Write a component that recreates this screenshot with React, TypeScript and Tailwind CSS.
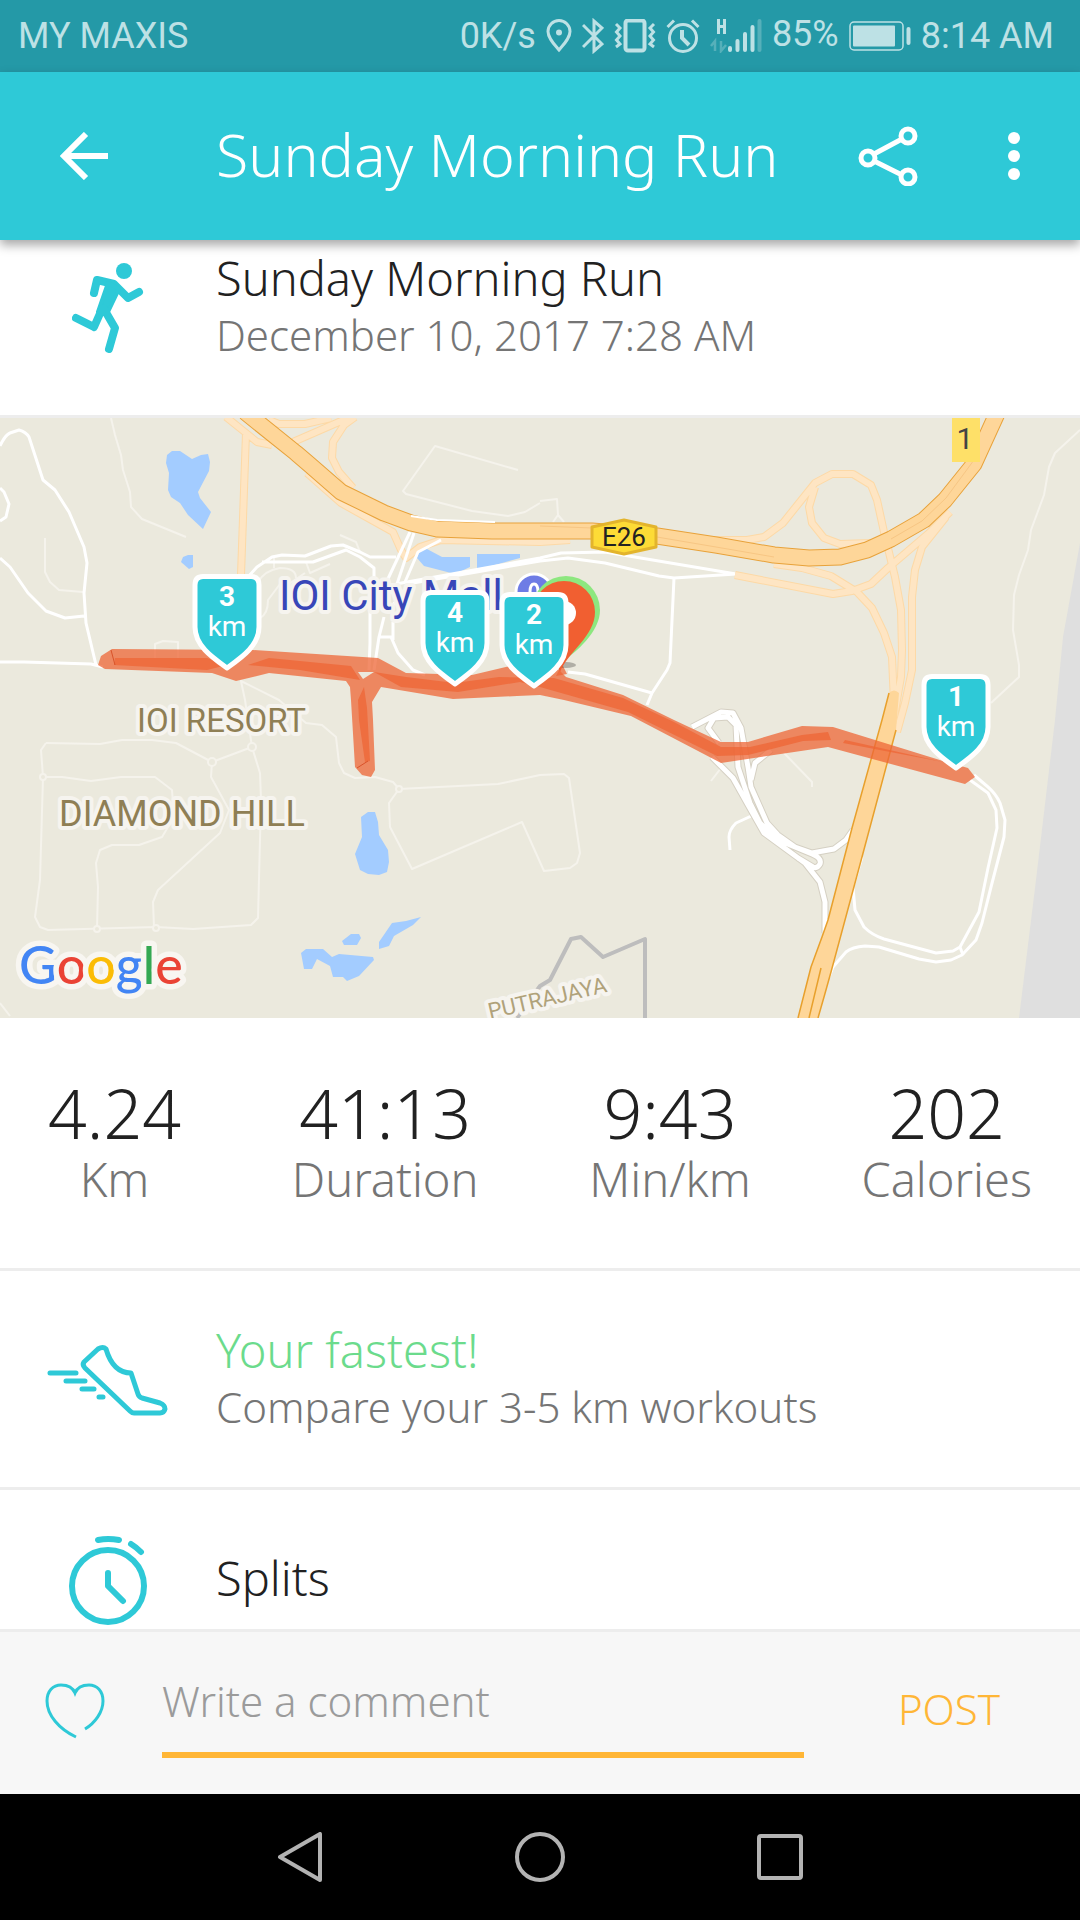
import type { ReactNode } from "react";

const stats = [
  { value: "4.24", label: "Km" },
  { value: "41:13", label: "Duration" },
  { value: "9:43", label: "Min/km" },
  { value: "202", label: "Calories" },
];

const kmMarkers = [
  { km: 1, x: 956, y: 256 },
  { km: 3, x: 227, y: 156 },
  { km: 4, x: 455, y: 172 },
  { km: 2, x: 534, y: 174 },
];

const interchange =
  "M692 309 L721 294 L733 295 L741 310 L748 349 L751 369 L767 405 L778 417 L795 429 L812 435 L834 431 L846 422 L853 412 M719 325 L708 310 L714 300 L728 299 L736 307 L738 349 L750 385 L760 405 L778 422 L812 436 Q822 440 820 446 Q817 451 813 449 L798 440 M712 339 L733 360 L747 385 L764 415 L805 445 L820 464 L825 484 V515 M771 332 L755 345 L751 362";

const slipRoads =
  "M246 15 L241 157 M226 -1 L246 15 L257 24 L272 27 M269 2 L279 6 H305 L331 0 M293 24 L348 0 M355 -1 L344 7 L333 24 L332 40 L339 54 L353 70 M307 55 L341 85 L393 114 L401 132 L406 140 L420 129 L441 122 L540 124 L570 122 M712 122 L747 122 L764 119 L783 105 L815 65 L832 56 H853 L871 67 L877 82 L884 114 L895 159 L901 192 L902 232 L901 259 L893 305 M815 69 L809 89 L812 105 L824 120 L840 126 L871 125 M774 146 L802 150 L831 158 L857 174 L872 190 L884 215 L892 239 L894 285 M735 157 L833 176 L852 173 L871 166 L888 150 L929 115 L950 94 M946 99 L922 129 L915 152 L912 179 V252 L905 285 L897 314";

const e26 =
  "M245 -6 L296 35 L310 47 L341 74 L384 95 L411 105 L437 111 L492 113 L592 113 L657 118 L716 127 L774 137 L809 140 L840 139 L867 132 L891 121 L924 102 L945 82 L974 46 L1000 -11";

const StatusBar = () => (
  <div className="flex h-[72px] items-center justify-between bg-[#2499a7] pl-[18px] pr-[26px] font-[Roboto,sans-serif] text-[36px] leading-[44px] font-normal text-[#bde1e5]">
    <span>MY MAXIS</span>
    <div className="flex items-center gap-[10px]">
      <span>0K/s</span>
      <svg className="h-[34px] w-[26px]" viewBox="0 0 26 34" fill="none" stroke="currentColor" strokeWidth="3">
        <path d="M13 31 C8 25 2 19 2 12.500 A11 11 0 0 1 24 12.500 C24 19 18 25 13 31 Z" />
        <circle cx="13" cy="13.500" r="3" fill="currentColor" stroke="none" />
      </svg>
      <svg className="h-[36px] w-[22px]" viewBox="0 0 22 36" fill="none" stroke="currentColor" strokeWidth="3">
        <path d="M1 7 L20 26 L12 33 V3 L20 10 L1 29" />
      </svg>
      <svg className="h-[34px] w-[42px]" viewBox="0 0 42 34" fill="none" stroke="currentColor" strokeWidth="3">
        <rect x="11.500" y="1.500" width="19" height="30" rx="2.500" strokeWidth="4" />
        <path d="M2 5 L6 9 L2.500 13 L6 17 L2.500 21 L6 25 L2 28 M40 5 L36 9 L39.500 13 L36 17 L39.500 21 L36 25 L40 28" />
      </svg>
      <svg className="h-[34px] w-[34px]" viewBox="0 0 34 34" fill="none" stroke="currentColor" strokeWidth="3">
        <circle cx="17" cy="19" r="13.500" />
        <path d="M16 11 V19 L23 26" strokeWidth="4" />
        <path d="M1.500 8 L8 1.500 M32.500 8 L26 1.500" />
      </svg>
      <svg className="h-[34px] w-[52px]" viewBox="0 0 52 34" fill="none" stroke="currentColor" strokeLinecap="round">
        <path d="M8.500 0 V15 M14.500 0 V15 M8.500 7.500 H14.500" strokeWidth="3" strokeLinecap="butt" />
        <g stroke="#56b0ba">
          <path d="M1 27 L5 22 V32 M16 26 L11 32 V22" strokeWidth="2.500" strokeLinecap="butt" />
          <path d="M49.500 2 V31" strokeWidth="4" />
        </g>
        <path d="M20 29 V31 M27.500 22 V31 M35 15 V31 M42.500 8 V31" strokeWidth="4" />
      </svg>
      <span className="pb-1">85%</span>
      <svg className="h-[30px] w-[62px]" viewBox="0 0 62 30" fill="none" stroke="currentColor">
        <rect x="1" y="1" width="53" height="28" rx="4" strokeWidth="1.500" />
        <rect x="4" y="4.500" width="42" height="21" rx="1" fill="currentColor" stroke="none" />
        <path d="M59.500 8 V22" strokeWidth="4" strokeLinecap="round" />
      </svg>
      <span>8:14 AM</span>
    </div>
  </div>
);

const AppBar = () => (
  <header className="relative z-10 flex h-[168px] items-center bg-[#2ec9d7] pr-[30px] text-white shadow-[0_5px_10px_rgba(0,0,0,0.35)]">
    <button aria-label="Back" className="flex w-[216px] pl-[60px]">
      <svg className="h-[48px] w-[48px]" viewBox="0 0 48 48" fill="none" stroke="currentColor" strokeWidth="6">
        <path d="M48 24 H5 M26 2 L4 24 L26 46" />
      </svg>
    </button>
    <h1 className="flex-1 whitespace-nowrap pb-1 text-[59px] leading-[76px]">Sunday Morning Run</h1>
    <button aria-label="Share" className="flex w-[100px] justify-center">
      <svg className="h-[60px] w-[60px]" viewBox="0 0 60 60" fill="none" stroke="currentColor" strokeWidth="5">
        <path d="M16 28 L44 13 M16 35 L44 49" />
        <circle cx="50" cy="10" r="7" />
        <circle cx="10" cy="32" r="7" />
        <circle cx="50" cy="51" r="7" />
      </svg>
    </button>
    <button aria-label="More options" className="ml-[40px] flex w-[72px] justify-center">
      <svg className="h-[48px] w-[12px]" viewBox="0 0 12 48" fill="currentColor">
        <circle cx="6" cy="6" r="6" />
        <circle cx="6" cy="24" r="6" />
        <circle cx="6" cy="42" r="6" />
      </svg>
    </button>
  </header>
);

const KmMarker = ({ km, x, y }: { km: number; x: number; y: number }) => (
  <g transform={`translate(${x} ${y})`} textAnchor="middle" fill="#fff">
    <path
      d="M-24 2.500 H24 Q32 2.500 32 11 V53 C32 72 14 84 0 94 C-14 84 -32 72 -32 53 V11 Q-32 2.500 -24 2.500 Z"
      fill="#2ec9d7"
      stroke="#fff"
      strokeWidth="5"
    />
    <text y="32" fontSize="28" fontWeight="700">{km}</text>
    <text y="62" fontSize="28">km</text>
  </g>
);

const RouteMap = () => (
  <svg className="block w-full font-normal" viewBox="0 0 1080 600" fill="none" fontFamily="Roboto, sans-serif" strokeLinejoin="round">
    <rect width="1080" height="600" fill="#ebe9dd" />
    <path d="M1080 125 L1063 219 L1055 302 L1036 462 L1019 600 H1080 Z" fill="#dfdfdf" />

    {/* lakes */}
    <g fill="#a3ccff">
      <path d="M172 33 L180 33 L192 41 L201 37 L208 36 L210 44 L209 53 L198 74 L200 80 L211 94 L203 111 L188 97 L180 85 L171 79 L168 72 L169 55 L166 45 L167 37 Z" />
      <path d="M188 137 L193 137 V149 L189 151 L181 144 L183 139 Z" />
      <path d="M420 131 L427 131 L442 139 L470 139 V149 L455 156 L424 148 L417 140 Z M477 136 H520 V140 L477 152 Z" />
      <path d="M361 399 L368 394 H375 L378 404 L379 417 L388 432 L389 444 L387 454 L379 457 L368 456 L360 452 L355 436 L362 419 Z" />
      <path d="M421 499 L413 507 L394 518 L389 528 L379 531 V524 L392 505 L406 503 Z M351 516 H359 L361 520 L357 527 H344 L342 523 Z" />
      <path d="M301 535 L306 531 H323 L332 539 L339 536 L373 539 L374 542 L359 558 L347 563 L343 559 H333 L330 548 L317 541 L312 551 H304 Z" />
    </g>

    {/* small lanes */}
    <g stroke="#f5f3ec" strokeWidth="2">
      <path d="M111 0 L115 17 L121 37 L123 52 L130 74 L131 89 L142 101 L186 119 M45 120 V154 L50 164 L59 172 L83 174" />
      <path d="M518 52 L435 28 L403 73 L406 76 L472 93 L508 98 L525 94 L540 85 M540 83 L557 81 L558 97 L553 104 M558 97 L564 104" />
      <path d="M155 240 V226 L163 223 L178 224 V240 M257 165 Q265 152 280 150 Q296 150 296 160 M260 200 Q268 196 268 182 L280 166 M306 144 L310 155 L330 146 M305 155 L280 172 M340 117 L356 124 L360 134 M274 138 V150" />
      <path d="M46 325 L100 326 L122 322 H152 L176 325 L212 344 L252 329 L245 282 L241 263 L279 282 L306 305 L322 307 L336 319 L339 345 L344 355 L355 360 L375 359 L393 364 L399 371 L498 366 L540 357 L564 356 L569 360 L580 435 L577 445 L570 450 L544 453 L522 404 L412 451 L390 409 L389 385 L399 371" />
      <path d="M46 325 L41 332 L43 359 L40 462 L35 499 L40 509 L48 512 L156 509 L193 511 L251 507 L258 500 L261 382 L260 355 L252 329" />
      <path d="M43 359 H62 L91 363 L121 359 H155 L172 372 L174 399 L162 419 L139 427 H112 L100 432 L96 445 L98 469 L97 511 M212 344 L211 359 L229 392 L220 415 L158 472 L153 484 L154 509" />
      <path d="M1080 12 L1055 35 L1049 49 L1044 77 L1031 112 L1028 132 L1019 157 L1014 177 L1013 212 L1019 247 V259 L991 285 M721 350 L711 363 M784 335 L812 364 V369 M0 585 L10 598" />
      <g fill="#ebe9dd">
        <circle cx="43" cy="359" r="3" />
        <circle cx="212" cy="344" r="4" />
        <circle cx="252" cy="329" r="4" />
        <circle cx="399" cy="371" r="3" />
        <circle cx="97" cy="511" r="3" />
        <circle cx="156" cy="510" r="3" />
      </g>
    </g>

    {/* local roads */}
    <g stroke="#fff" strokeWidth="3">
      <path d="M0 28 Q5 17 10 15 L19 12 Q26 14 29 19 L43 62 L55 72 L69 94 L84 129 L87 145 L84 175 L86 205 L96 247 M0 140 L10 149 L28 175 L46 193 L65 200 L84 198 M0 70 L4 74 L9 86 L6 99 L0 103 M0 244 H24 L91 246 L103 249" />
      <path d="M248 159 L257 149 L272 139 L282 137 L305 138 L331 128 L343 127 L360 134 L370 139 H396 M262 144 H313 L346 132 L360 139 L374 150 V165 L370 179 V225 L369 252" />
      <path d="M384 199 L379 219 L374 252 M379 219 H391 L398 235 L413 252 L425 257 M393 222 V204" />
      <path d="M396 166 L540 140 L561 135 L605 134 L736 156 L674 160 L659 158 L605 145 L568 140 L540 143 L413 165 L390 190" />
      <path d="M674 160 L670 245 L667 252 L652 275 L647 287 M568 254 L585 256 L652 275" />
      <path d="M974 357 L988 369 Q996 376 1000 385 L1005 402 L1004 419 L991 469 L982 505 L976 522 L962 537 L951 542 L936 544 L919 541 L879 529 L865 528 Q852 529 846 534 L833 549 L829 559" />
      <path d="M970 362 L988 375 L996 392 L997 410 L988 450 L979 494 L960 529 L953 533 L936 535 L884 521 Q872 517 864 509 L855 492 L853 469 L862 439 M960 529 L963 537" />
      <path d="M760 394 L736 405 Q729 412 729 419 L730 432" />
    </g>
    <path d={interchange} stroke="#d5d0c3" strokeWidth="7" />
    <path d={interchange} stroke="#fff" strokeWidth="5" />

    {/* slip roads */}
    <path d={slipRoads} stroke="#fdd9a6" strokeWidth="8" />
    <path d={slipRoads} stroke="#fee5c3" strokeWidth="6" />
    <path d="M410 114 L386 165 M414 115 L396 169 M441 122 L418 134 L405 164" stroke="#fff" strokeWidth="3" />

    {/* highways */}
    <path d={e26} stroke="#e8a23a" strokeWidth="17" />
    <path d={e26} stroke="#fed699" strokeWidth="15" />
    <path d="M657 119 L716 129 L774 139 M891 121 L922 103 L946 80 L974 42 M540 108 L592 110" stroke="#f7c684" strokeWidth="1" />
    <path d="M411 98 L437 102 L495 104" stroke="#fff" strokeWidth="2" />
    <path d="M889 275 L882 302 L852 410 L828 502 L822 519 L811 549 L798 600 H818 L824 579 L831 554 L862 439 L896 312 L899 275 Q894 270 889 275 Z" fill="#fed699" />
    <path d="M889 275 L882 302 L852 410 L828 502 L822 519 L811 549 L798 600 M818 600 L824 579 L831 554 L862 439 L896 312 M821 550 L809 600" stroke="#e8a02c" strokeWidth="1.500" />

    {/* district border */}
    <path d="M517 600 L540 568 L550 562 L571 521 L581 519 L603 539 L645 521 V600" stroke="#bdbdbd" strokeWidth="4" />

    {/* road shields */}
    <path d="M592 109 L624 102 L656 109 V129 L624 136 L592 129 Z" fill="#fddb36" stroke="#e3b42c" strokeWidth="3" />
    <text x="624" y="128" fontSize="26" textAnchor="middle" fill="#222">E26</text>
    <rect x="952" width="28" height="44" fill="#fee068" />
    <text x="965" y="31" fontSize="30" textAnchor="middle" fill="#444">1</text>

    {/* place names */}
    <g stroke="#f6f4ef" strokeWidth="8" paintOrder="stroke">
      <text x="279" y="192" fontSize="42" fill="#3846b8">IOI City Mall</text>
      <text x="137" y="314" fontSize="33" fill="#8f7f55">IOI RESORT</text>
      <text x="59" y="408" fontSize="36" fill="#8f7f55">DIAMOND HILL</text>
      <text transform="translate(490 601) rotate(-13)" fontSize="22" fill="#b0a27a">PUTRAJAYA</text>
    </g>
    <circle cx="534" cy="174" r="18" fill="#6e7ce5" stroke="#fff" strokeWidth="3" />
    <path d="M530 174 Q530 166 534 166 Q538 166 538 174" stroke="#fff" strokeWidth="3" />

    {/* recorded route */}
    <g fill="#ed6535" fillOpacity="0.75">
      <path
        fillRule="evenodd"
        d="M98 247 L101 238 L112 231 L253 232 L378 240 L406 255 L472 257 L510 248 L545 238 L566 259 L623 277 L674 302 L721 324 H748 L802 308 L833 309 L943 343 L968 350 L975 359 L965 366 L828 329 L721 345 L631 298 L564 282 L540 277 L517 278 L453 281 L381 269 L372 284 L373 302 L375 352 L371 359 L362 357 L355 349 L351 282 L350 269 L346 263 L269 255 L236 263 L212 255 L105 251 Z M358 254 L363 261 L374 254 Z"
      />
      <path d="M115 240 H207 L227 247 L207 252 L114 247 Z M248 247 L269 240 L351 248 L360 262 L300 252 Z M364 269 L358 282 L359 302 L365 344 L370 343 L367 290 Z" />
      <path d="M374 254 L406 259 L455 265 L499 259 L554 260 L623 280 L674 304 L721 329 L750 329 L802 317 L828 314 L831 322 L803 323 L748 337 L717 338 L628 294 L540 269 L520 264 L458 274 L401 269 Z M843 325 L943 344 L845 322 Z" />
      <path d="M556 258 L562 246 L567 256 Z" />
    </g>
    <path d="M111 232 L115 247 M357 350 L368 343" stroke="#d9532a" strokeWidth="1" />

    {/* start and finish pins */}
    <ellipse cx="566" cy="247" rx="10" ry="3" fill="#000" fillOpacity="0.25" />
    <path d="M566 158 A34 34 0 0 1 600 192 C600 214 576 234 562 244 L532 192 A34 34 0 0 1 566 158 Z" fill="#8de77f" />
    <path d="M564 163 A31 31 0 0 1 595 194 C595 218 568 234 560 254 L533 194 A31 31 0 0 1 564 163 Z" fill="#f15f31" />
    <circle cx="564" cy="195" r="12" fill="#fff" />

    {kmMarkers.map((marker) => (
      <KmMarker key={marker.km} {...marker} />
    ))}

    <text x="19" y="566" fontFamily="Lato, sans-serif" fontSize="52" fontWeight="500" stroke="#f8f6f1" strokeWidth="11" paintOrder="stroke">
      <tspan fill="#4285f4">G</tspan>
      <tspan fill="#ea4335">o</tspan>
      <tspan fill="#fbbc05">o</tspan>
      <tspan fill="#4285f4">g</tspan>
      <tspan fill="#34a853">l</tspan>
      <tspan fill="#ea4335">e</tspan>
    </text>
  </svg>
);

const Row = ({ icon, className, children }: { icon: ReactNode; className: string; children: ReactNode }) => (
  <section className={`flex items-center border-b-3 border-[#ededed] ${className}`}>
    <div className="flex w-[216px] shrink-0 justify-center text-[#2ec9d7]">{icon}</div>
    <div className="min-w-0 flex-1">{children}</div>
  </section>
);

const RunnerIcon = () => (
  <svg className="h-[92px] w-[72px]" viewBox="0 0 72 92" fill="none" stroke="currentColor" strokeWidth="8" strokeLinecap="round" strokeLinejoin="round">
    <circle cx="52" cy="10" r="8" fill="currentColor" stroke="none" />
    <path d="M22 32 L25 19 L42 23 L56 37 L67 31" />
    <path d="M36 22 L47 28 L36 51 L26 51 Z" fill="currentColor" strokeWidth="4" />
    <path d="M30 48 L22 66 L4 57 M32 48 L43 67 L37 88" />
  </svg>
);

const ShoeIcon = () => (
  <svg className="h-[74px] w-[122px]" viewBox="0 0 122 74" fill="none" stroke="currentColor" strokeWidth="5" strokeLinecap="round" strokeLinejoin="round">
    <path d="M3 31 H29 M19 39 H38 M35 47 H47 M52 55 H56" />
    <path d="M37 20 L51 7 Q56 4 59 7 Q66 31 84 31 L91 52 Q92 55 95 56 L113 61 Q118 63 118 67 Q117 71 113 71 H87 Q85 71 83 69 L38 26 Q35 23 37 20 Z" />
  </svg>
);

const StopwatchIcon = () => (
  <svg className="h-[90px] w-[78px]" viewBox="0 0 78 90" fill="none" stroke="currentColor" strokeWidth="6" strokeLinecap="round" strokeLinejoin="round">
    <circle cx="39" cy="51" r="36" />
    <path d="M29 5 Q39 3 50 5 M62 9 Q67 12 72 17 M39 38 V51 L54 66" />
  </svg>
);

const CommentBar = () => (
  <form className="flex items-center bg-[#f7f7f7] pb-9 pl-[45px] pr-[46px] pt-[39px]" onSubmit={(e) => e.preventDefault()}>
    <button type="button" aria-label="Like" className="pb-2 text-[#2ec9d7]">
      <svg className="h-[56px] w-[60px]" viewBox="0 0 60 56" fill="none" stroke="currentColor" strokeWidth="3">
        <path d="M31 54 C14 46 2 32 2 18 C2 8 8 2 16 2 C23 2 28 5 30 10 C32 5 37 2 44 2 C52 2 58 8 58 18 C58 29 50 40 40 46" />
      </svg>
    </button>
    <input
      type="text"
      aria-label="Write a comment"
      placeholder="Write a comment"
      className="ml-[57px] min-w-0 flex-1 border-b-6 border-[#ffb636] bg-transparent pb-[21px] text-[42px] leading-[60px] text-[#212121] outline-none placeholder:text-[#9b9b9b]"
    />
    <button type="submit" className="ml-[60px] w-[170px] pb-3 text-[42px] leading-[60px] text-[#ffb636]">
      POST
    </button>
  </form>
);

const NavigationBar = () => (
  <nav className="bg-black">
    <div className="mx-auto grid h-[126px] w-2/3 grid-cols-3 place-items-center text-[#b3b3b3]">
      <button aria-label="Back">
        <svg className="h-[50px] w-[46px]" viewBox="0 0 46 50" fill="none" stroke="currentColor" strokeWidth="4" strokeLinejoin="round">
          <path d="M43 2 V48 L3 25 Z" />
        </svg>
      </button>
      <button aria-label="Home">
        <svg className="h-[50px] w-[50px]" viewBox="0 0 50 50" fill="none" stroke="currentColor" strokeWidth="4">
          <circle cx="25" cy="25" r="23" />
        </svg>
      </button>
      <button aria-label="Recent apps">
        <svg className="h-[46px] w-[46px]" viewBox="0 0 46 46" fill="none" stroke="currentColor" strokeWidth="4">
          <rect x="2" y="2" width="42" height="42" rx="2" />
        </svg>
      </button>
    </div>
  </nav>
);

export default function App() {
  return (
    <div className="flex min-h-screen flex-col bg-white font-['Noto_Sans',sans-serif] font-[350] text-[#212121]">
      <StatusBar />
      <AppBar />
      <main className="flex-1">
        <Row icon={<RunnerIcon />} className="pb-[51px] pt-[10px]">
          <h2 className="text-[47px] leading-[56px]">Sunday Morning Run</h2>
          <p className="text-[42px] leading-[58px] text-[#757575]">December 10, 2017 7:28 AM</p>
        </Row>
        <RouteMap />
        <dl className="flex justify-between border-b-3 border-[#ededed] px-12 pb-[61px] pt-[57px] text-center">
          {stats.map((stat) => (
            <div key={stat.label} className="flex flex-col-reverse">
              <dt className="text-[47px] leading-[56px] text-[#757575]">{stat.label}</dt>
              <dd className="text-[68px] leading-[76px]">{stat.value}</dd>
            </div>
          ))}
        </dl>
        <Row icon={<ShoeIcon />} className="pb-[51px] pt-[51px]">
          <h2 className="text-[47px] leading-[56px] text-[#6bdb8c]">Your fastest!</h2>
          <p className="text-[42px] leading-[58px] text-[#757575]">Compare your 3-5 km workouts</p>
        </Row>
        <Row icon={<StopwatchIcon />} className="pb-1 pt-[45px]">
          <h2 className="pb-1 text-[47px] leading-[56px]">Splits</h2>
        </Row>
      </main>
      <CommentBar />
      <NavigationBar />
    </div>
  );
}
